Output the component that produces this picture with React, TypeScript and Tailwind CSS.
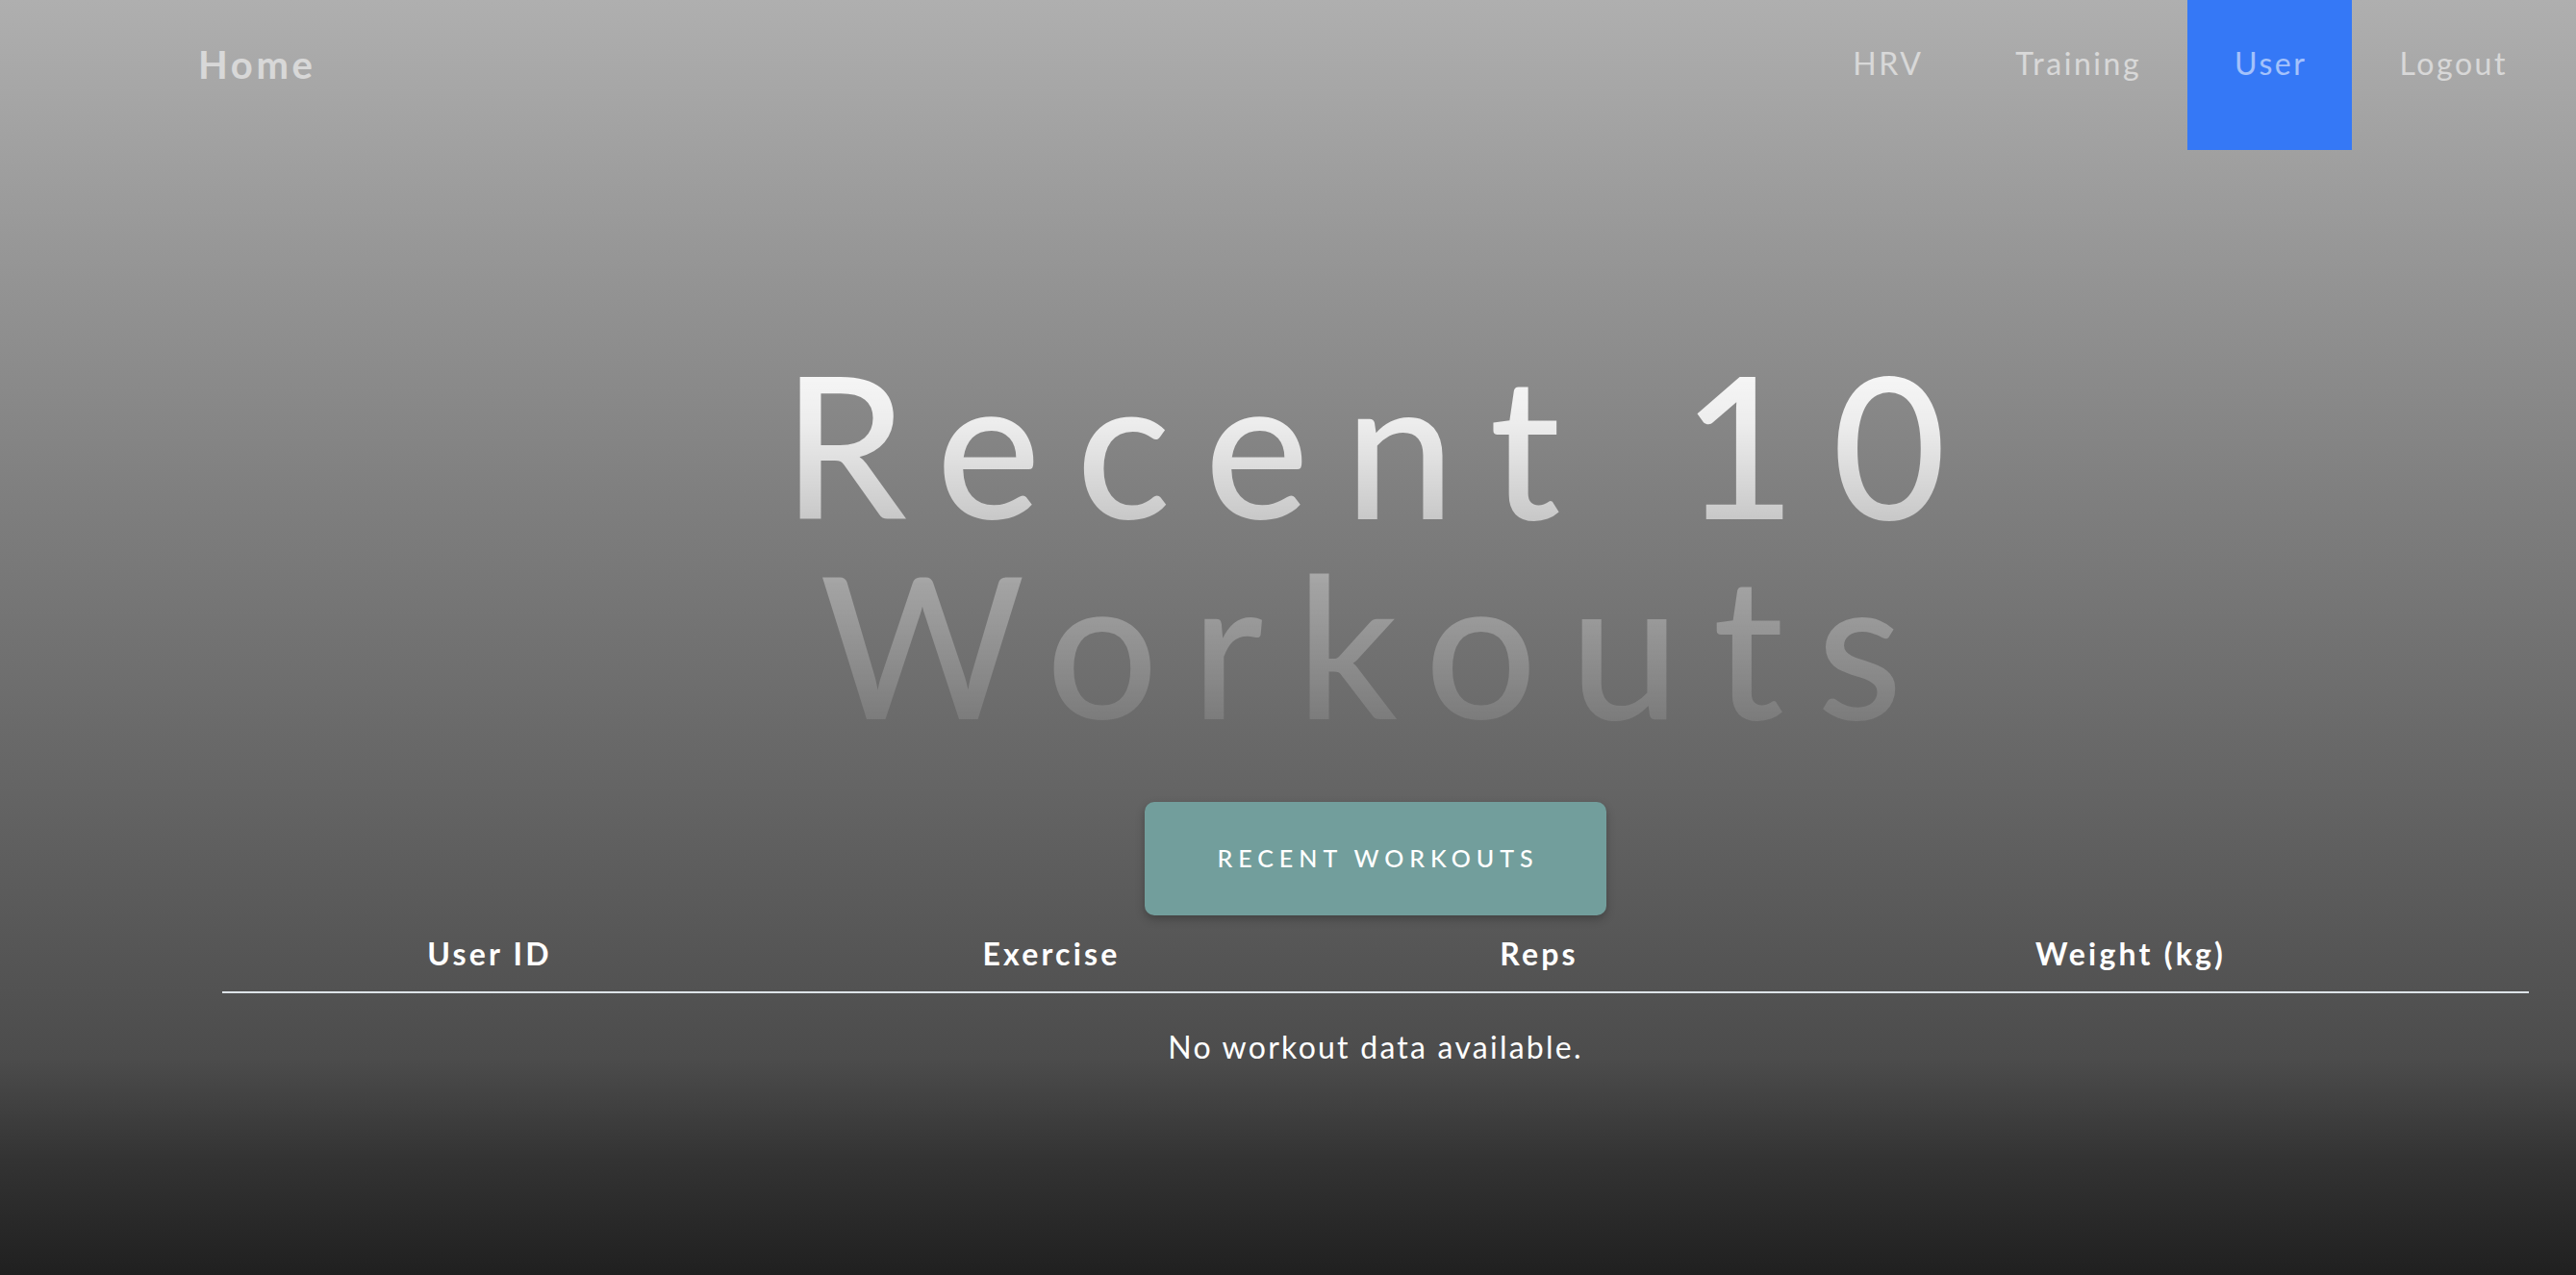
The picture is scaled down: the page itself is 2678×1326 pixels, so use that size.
import React from "react";

const navItems = [
  { label: "HRV", w: "w-[167px]", active: false },
  { label: "Training", w: "w-[229px]", active: false },
  { label: "User", w: "w-[171px]", active: true },
  { label: "Logout", w: "w-[209px]", active: false },
];

export default function App() {
  return (
    <div className="min-h-[1326px] w-full bg-[linear-gradient(180deg,#afafaf_0%,#808080_38%,#4c4c4c_83%,#333333_91%,#202020_100%)] font-['Lato',sans-serif] text-white">
      <nav className="flex h-[156px] items-start justify-between pr-[24px]">
        <a className="ml-[206px] pt-[43px] text-[40px] font-bold leading-[48px] tracking-[0.09em] text-white/55">
          Home
        </a>
        <ul className="flex h-full">
          {navItems.map((item) => (
            <li
              key={item.label}
              className={`${item.w} flex h-full justify-center pl-[0.08em] pt-[47px] text-[32px] leading-[38px] tracking-[0.08em] text-white/55 ${
                item.active ? "bg-[#3578f6]" : ""
              }`}
            >
              {item.label}
            </li>
          ))}
        </ul>
      </nav>

      <main className="ml-[231px] mr-[49px] flex flex-col items-center pt-[201px]">
        <h1 className="bg-[linear-gradient(180deg,rgba(255,255,255,0.97)_0%,rgba(255,255,255,0.85)_20%,rgba(255,255,255,0.58)_44%,rgba(255,255,255,0.33)_60%,rgba(255,255,255,0.08)_100%)] bg-clip-text text-center text-[205px] font-medium leading-[208px] text-transparent">
          <span className="block pl-[14px] tracking-[0.181em]">Recent 10</span>
          <span className="block pl-[4px] tracking-[0.166em]">Workouts</span>
        </h1>

        <button className="mt-[61px] h-[118px] w-[480px] rounded-[10px] bg-[#729e9c] pl-[0.2em] text-[25px] font-medium tracking-[0.24em] text-white shadow-[0_4px_10px_rgba(0,0,0,0.25)]">
          RECENT WORKOUTS
        </button>

        <table className="w-full table-fixed border-collapse">
          <colgroup>
            <col className="w-[556px]" />
            <col className="w-[612px]" />
            <col className="w-[402px]" />
            <col className="w-[828px]" />
          </colgroup>
          <thead>
            <tr className="border-b-2 border-[#dde3e8]">
              <th className="h-[80px] text-center text-[32px] font-bold tracking-[0.1em]">User ID</th>
              <th className="h-[80px] text-center text-[32px] font-bold tracking-[0.1em]">Exercise</th>
              <th className="h-[80px] text-center text-[32px] font-bold tracking-[0.1em]">Reps</th>
              <th className="h-[80px] text-center text-[32px] font-bold tracking-[0.1em]">Weight (kg)</th>
            </tr>
          </thead>
          <tbody>
            <tr>
              <td colSpan={4} className="h-[112px] text-center text-[32px] tracking-[0.07em]">
                No workout data available.
              </td>
            </tr>
          </tbody>
        </table>
      </main>
    </div>
  );
}
